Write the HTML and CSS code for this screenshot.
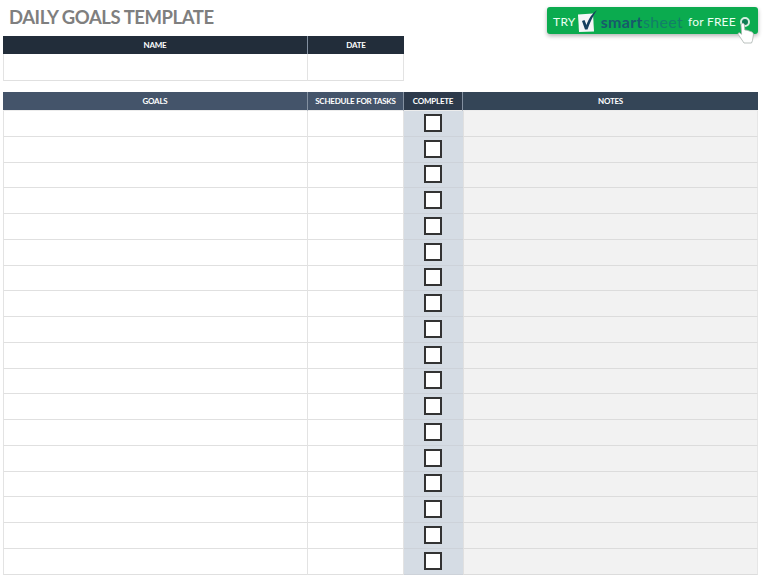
FILE: index.html
```html
<!DOCTYPE html>
<html lang="en">
<head>
<meta charset="utf-8">
<title>Daily Goals Template</title>
<link rel="stylesheet" href="styles.css">
</head>
<body>
<div class="page">
  <header class="top">
    <h1 class="title">DAILY GOALS TEMPLATE</h1>
    <a class="cta">
      <span class="try">TRY</span>
      <svg class="logo" viewBox="0 0 22 24" width="22" height="24">
        <path d="M1 5.5 L16 4.5 L17 22.5 L2 23 Z" fill="#f4f6f8"/>
        <path d="M5 12 L7.5 11 L9.5 16 C11.5 10 14.5 5 20 1 C16 7 13 13 10.5 20.5 L8 20.5 Z" fill="#17405f"/>
      </svg>
      <span class="brand"><b>smart</b>sheet</span>
      <span class="free">for FREE</span>
      <span class="target"></span>
      <svg class="hand" viewBox="0 0 18 22" width="18" height="22">
        <path d="M5 1.5 C6.3 1 7.3 1.8 7.4 3 L7.8 8 L10 8.2 L14.5 9.8 C16 10.5 16.6 11.5 16.4 13 L15.5 18.5 L14.5 21 L7 21 L5 18 L1.3 12.5 C0.8 11.5 1.5 10.5 2.5 10.8 L4.6 12.3 L4 3 C4 2.3 4.4 1.8 5 1.5 Z" fill="#fff" stroke="#aab2ae" stroke-width=".8"/>
      </svg>
    </a>
  </header>

  <section class="grid info">
    <div class="cell head dark">NAME</div>
    <div class="cell head dark last">DATE</div>
    <div class="cell body first"></div>
    <div class="cell body"></div>
  </section>

  <section class="grid goals" id="goals">
    <div class="cell head slate">GOALS</div>
    <div class="cell head slate">SCHEDULE FOR TASKS</div>
    <div class="cell head complete">COMPLETE</div>
    <div class="cell head navy">NOTES</div>
    <script>
      // 18 identical blank rows
      document.currentScript.insertAdjacentHTML('afterend', Array(18).fill(
        '<div class="cell body first"></div><div class="cell body"></div>' +
        '<div class="cell check"><span class="box"></span></div><div class="cell note"></div>'
      ).join(''));
    </script>
  </section>
</div>
</body>
</html>
```
FILE: styles.css
```css
* { box-sizing: border-box; }
html, body { margin: 0; background: #fff; }
body { width: 768px; height: 576px; overflow: hidden; font-family: "Lato", "Liberation Sans", sans-serif; }
.page { padding: 0 10px 0 3px; display: flex; flex-direction: column; }

.top { height: 36px; display: flex; justify-content: space-between; align-items: flex-start; }
.title { margin: 7px 0 0 6px; font-size: 18.5px; line-height: 20px; font-weight: 700; color: #7f7f7f; letter-spacing: -.45px; }

.cta { position: relative; width: 211px; height: 27px; margin-top: 7px; padding: 2px 0 0 6px; display: flex; align-items: center; background: #0bab4f; border-radius: 3px; box-shadow: 0 2px 4px rgba(0,0,0,.3); color: #eafff2; font-size: 12px; }
.try { letter-spacing: .3px; }
.logo { margin: -2px 0 0 1px; flex: none; }
.brand { margin-left: 2px; font-size: 16px; letter-spacing: .35px; color: #127f68; }
.brand b { color: #175a6b; font-weight: 700; }
.free { margin-left: 5px; letter-spacing: .2px; }
.target { position: absolute; left: 193px; top: 10px; width: 10px; height: 10px; border: 2px solid #d6efe0; border-radius: 50%; background: #0f7d55; }
.hand { position: absolute; left: 190px; top: 15px; }

.grid { display: grid; width: 755px; }
.info { width: 401px; grid-template-columns: 305px 96px; grid-template-rows: 18px 27px; }
.goals { margin-top: 11px; grid-template-columns: 305px 96px 59px 295px; grid-template-rows: 19px repeat(18, 25.75px); }

.cell { border-right: 1px solid #e3e3e3; border-bottom: 1px solid #e0e0e0; }
.first { border-left: 1px solid #e3e3e3; }
.head { display: flex; align-items: center; justify-content: center; border-right: 1px solid #8390a0; font-size: 8px; font-weight: 700; color: #fff; letter-spacing: -.25px; }
.goals .head { border-bottom-color: #ececec; }
.info .head { border-bottom: 0; }
.dark { background: #222d3a; }
.last { border-right: 0; }
.slate { background: #44546a; }
.complete { background: #2d3a4b; }
.navy { background: #344557; border-right: 0; }
.body { background: #fff; }
.check { display: flex; align-items: center; justify-content: center; background: #d5dce4; border-bottom-color: #cdd2d9; border-right: 0; }
.note { background: #f2f2f2; border-right: 1px solid #e6e6e6; border-left: 1px solid #e0e0e0; border-bottom-color: #dcdcdc; }
.box { width: 18px; height: 18px; margin: 0 1px 1px 0; background: #fff; border: 2px solid #333; }
```
